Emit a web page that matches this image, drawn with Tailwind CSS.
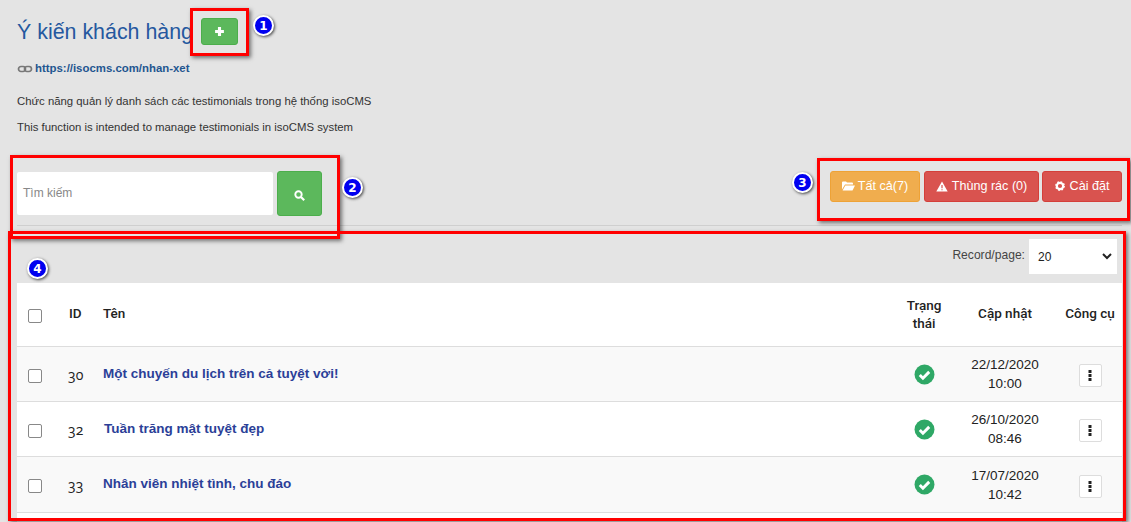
<!DOCTYPE html>
<html lang="vi">
<head>
    <meta charset="UTF-8">
    <title>Ý kiến khách hàng</title>
    <script src="https://cdn.jsdelivr.net/npm/@tailwindcss/browser@4"></script>
</head>
<body class="relative h-[522px] overflow-hidden bg-[#e4e4e4] font-['Liberation_Sans',sans-serif] text-[#333]">
    <div class="pl-[17px] pr-[9px]">
        <!-- Heading -->
        <div class="flex items-center h-[46px] pt-[17px]">
            <h1 class="text-[21.4px] leading-[28px] text-[#25589f]">Ý kiến khách hàng</h1>
            <button class="ml-2 flex h-[27px] w-[37px] items-center justify-center rounded-[3px] border border-[#4cae4c] bg-[#5cb85c]">
                <svg class="h-[11px] w-[11px]" viewBox="0 0 10 10"><path d="M5 1v8M1 5h8" stroke="#fff" stroke-width="2.8"/></svg>
            </button>
        </div>
        <div class="mt-[15px] flex h-[16px] items-center text-[11.4px] font-bold text-[#1f5690]">
            <svg class="mr-[2px] h-[8px] w-[16px]" viewBox="0 0 15 8"><rect x="1" y="1.500" width="7" height="5" rx="2.500" fill="none" stroke="#777" stroke-width="1.700"/><rect x="7" y="1.500" width="7" height="5" rx="2.500" fill="none" stroke="#777" stroke-width="1.700"/></svg>
            https://isocms.com/nhan-xet
        </div>
        <p class="mt-[16px] text-[11.35px] leading-[16px] text-[#333]">Chức năng quản lý danh sách các testimonials trong hệ thống isoCMS</p>
        <p class="mt-[10px] text-[11.35px] leading-[16px] text-[#333]">This function is intended to manage testimonials in isoCMS system</p>

        <!-- Toolbar -->
        <div class="mt-[36px] flex h-[54px] items-start justify-between">
            <div class="flex items-start">
                <div class="mt-px flex h-[43px] w-[256px] items-center rounded-[2px] bg-white pb-[2px] pl-[6px] text-[12px] text-[#888]">Tìm kiếm</div>
                <button class="ml-1 flex h-[45px] w-[45px] items-center justify-center rounded-[3px] border border-[#4cae4c] bg-[#5cb85c]">
                    <svg class="mt-[3px] h-[11px] w-[11px]" viewBox="0 0 11 11" fill="none" stroke="#fff"><circle cx="4.500" cy="4.500" r="3.200" stroke-width="1.900"/><path d="M7 7l3.200 3.200" stroke-width="2.200"/></svg>
                </button>
            </div>
            <div class="flex gap-1 text-[12.6px] text-white">
                <div class="flex h-[31px] w-[90px] items-center justify-center rounded-[3px] border border-[#eea236] bg-[#f0ad4e] pb-px">
                    <svg class="mr-[3px] h-[10px] w-[13px]" viewBox="0 0 13 10" fill="#fff"><path d="M0 1.500Q0 .5 1 .5h3l1 1h5q1 0 1 1v1H3L0 8.500zM3.300 4.500H13l-2.500 5H.6z"/></svg>Tất cả(7)
                </div>
                <div class="flex h-[31px] w-[115px] items-center justify-center rounded-[3px] border border-[#d43f3a] bg-[#d9534f] pb-px">
                    <svg class="mr-[4px] h-[11px] w-[12px]" viewBox="0 0 12 11"><path d="M6 .5l5.700 10H.3z" fill="#fff"/><path d="M6 4v3.300M6 8.200v1" stroke="#d9534f" stroke-width="1.200"/></svg>Thùng rác (0)
                </div>
                <div class="-ml-px flex h-[31px] w-[80px] items-center justify-center rounded-[3px] border border-[#d43f3a] bg-[#d9534f] pb-px">
                    <svg class="mr-[5px] h-[10px] w-[10px]" viewBox="0 0 10 10"><circle cx="5" cy="5" r="3.200" fill="none" stroke="#fff" stroke-width="2.200"/><circle cx="5" cy="5" r="4.300" fill="none" stroke="#fff" stroke-width="1.200" stroke-dasharray="1.700 1.680"/></svg>Cài đặt
                </div>
            </div>
        </div>
        <div class="h-px bg-[#cfcfcf]"></div>

        <!-- Per page -->
        <div class="mt-[13px] flex h-[44px] items-start justify-end pr-[5px]">
            <span class="mt-[9px] mr-1 text-[12.1px] leading-[14px] text-[#444]">Record/page:</span>
            <div class="flex h-[35px] w-[88px] items-center justify-between bg-white pl-[9px] pr-[5px] text-[12px] text-[#222]">
                20
                <svg class="h-[7px] w-[10px]" viewBox="0 0 10 7" fill="none" stroke="#222" stroke-width="2"><path d="M1 1l4 4 4-4"/></svg>
            </div>
        </div>

        <!-- Table -->
        <div class="bg-white text-[13.5px] text-[#222]">
            <div class="flex h-[64px] items-center border-b border-[#ddd] pb-[2px] font-['Roboto',sans-serif] text-[13.5px] font-medium">
                <div class="flex w-[35px] justify-center pt-[4px]"><span class="h-[14px] w-[14px] rounded-[2px] border border-[#888] bg-white"></span></div>
                <div class="w-[51px] pl-[17px]">ID</div>
                <div class="flex-1">Tên</div>
                <div class="w-[68px] text-center leading-[18px]">Trạng<br>thái</div>
                <div class="w-[94px] text-center">Cập nhật</div>
                <div class="w-[70px] pl-[6px] text-center">Công cụ</div>
            </div>

            <div class="flex h-[55px] items-center border-b border-[#ddd] bg-[#f9f9f9]">
                <div class="flex w-[35px] justify-center pt-[3px]"><span class="h-[14px] w-[14px] rounded-[2px] border border-[#888] bg-white"></span></div>
                <div class="w-[51px] pl-[16px] font-['Open_Sans',serif] text-[14px] [font-feature-settings:'onum']">30</div>
                <div class="flex-1 font-bold text-[#2b3f98]">Một chuyến du lịch trên cả tuyệt vời!</div>
                <div class="flex w-[68px] justify-center">
                    <svg class="h-[21px] w-[21px]" viewBox="0 0 20 20"><circle cx="10" cy="10" r="9.500" fill="#2fa866"/><path d="M5.500 10.500l3 3 6-6" fill="none" stroke="#fff" stroke-width="2.800"/></svg>
                </div>
                <div class="w-[94px] text-center leading-[19px]">22/12/2020<br>10:00</div>
                <div class="flex w-[70px] justify-center pl-[6px] pt-[3px]">
                    <span class="flex h-[23px] w-[23px] items-center justify-center rounded-[2px] border border-[#ddd] bg-white"><svg class="h-[11px] w-1" viewBox="0 0 4 11" fill="#222"><rect x=".5" width="3" height="3"/><rect x=".5" y="4" width="3" height="3"/><rect x=".5" y="8" width="3" height="3"/></svg></span>
                </div>
            </div>

            <div class="flex h-[55px] items-center border-b border-[#ddd] bg-white">
                <div class="flex w-[35px] justify-center pt-[3px]"><span class="h-[14px] w-[14px] rounded-[2px] border border-[#888] bg-white"></span></div>
                <div class="w-[51px] pl-[16px] font-['Open_Sans',serif] text-[14px] [font-feature-settings:'onum']">32</div>
                <div class="flex-1 pl-px font-bold text-[#2b3f98]">Tuần trăng mật tuyệt đẹp</div>
                <div class="flex w-[68px] justify-center">
                    <svg class="h-[21px] w-[21px]" viewBox="0 0 20 20"><circle cx="10" cy="10" r="9.500" fill="#2fa866"/><path d="M5.500 10.500l3 3 6-6" fill="none" stroke="#fff" stroke-width="2.800"/></svg>
                </div>
                <div class="w-[94px] text-center leading-[19px]">26/10/2020<br>08:46</div>
                <div class="flex w-[70px] justify-center pl-[6px] pt-[3px]">
                    <span class="flex h-[23px] w-[23px] items-center justify-center rounded-[2px] border border-[#ddd] bg-white"><svg class="h-[11px] w-1" viewBox="0 0 4 11" fill="#222"><rect x=".5" width="3" height="3"/><rect x=".5" y="4" width="3" height="3"/><rect x=".5" y="8" width="3" height="3"/></svg></span>
                </div>
            </div>

            <div class="flex h-[56px] items-center border-b border-[#ddd] bg-[#f9f9f9]">
                <div class="flex w-[35px] justify-center pt-[3px]"><span class="h-[14px] w-[14px] rounded-[2px] border border-[#888] bg-white"></span></div>
                <div class="w-[51px] pl-[16px] font-['Open_Sans',serif] text-[14px] [font-feature-settings:'onum']">33</div>
                <div class="flex-1 font-bold text-[#2b3f98]">Nhân viên nhiệt tình, chu đáo</div>
                <div class="flex w-[68px] justify-center">
                    <svg class="h-[21px] w-[21px]" viewBox="0 0 20 20"><circle cx="10" cy="10" r="9.500" fill="#2fa866"/><path d="M5.500 10.500l3 3 6-6" fill="none" stroke="#fff" stroke-width="2.800"/></svg>
                </div>
                <div class="w-[94px] text-center leading-[19px]">17/07/2020<br>10:42</div>
                <div class="flex w-[70px] justify-center pl-[6px] pt-[3px]">
                    <span class="flex h-[23px] w-[23px] items-center justify-center rounded-[2px] border border-[#ddd] bg-white"><svg class="h-[11px] w-1" viewBox="0 0 4 11" fill="#222"><rect x=".5" width="3" height="3"/><rect x=".5" y="4" width="3" height="3"/><rect x=".5" y="8" width="3" height="3"/></svg></span>
                </div>
            </div>
            <div class="h-[20px]"></div>
        </div>
    </div>

    <!-- Annotations laid over the screenshot -->
    <div class="absolute left-[190px] top-[8px] h-[48px] w-[59px] border-[3px] border-[#f00] shadow-[2px_2px_4px_rgba(0,0,0,0.5)]"></div>
    <div class="absolute left-[10px] top-[155px] h-[84px] w-[330px] border-[3px] border-[#f00] shadow-[2px_2px_4px_rgba(0,0,0,0.5)]"></div>
    <div class="absolute left-[817px] top-[158px] h-[63px] w-[313px] border-[3px] border-[#f00] shadow-[2px_2px_4px_rgba(0,0,0,0.5)]"></div>
    <div class="absolute left-[8px] top-[231px] h-[290px] w-[1118px] border-[3px] border-[#f00] shadow-[2px_2px_4px_rgba(0,0,0,0.5)]"></div>

    <div class="absolute left-[253px] top-[15px] flex h-[21px] w-[21px] items-center justify-center rounded-full border-2 border-white bg-[#0000f0] font-['DejaVu_Sans',sans-serif] text-[12px] font-bold text-white shadow-[1px_1px_3px_rgba(0,0,0,0.7)]">1</div>
    <div class="absolute left-[342px] top-[177px] flex h-[21px] w-[21px] items-center justify-center rounded-full border-2 border-white bg-[#0000f0] font-['DejaVu_Sans',sans-serif] text-[12px] font-bold text-white shadow-[1px_1px_3px_rgba(0,0,0,0.7)]">2</div>
    <div class="absolute left-[792px] top-[172px] flex h-[21px] w-[21px] items-center justify-center rounded-full border-2 border-white bg-[#0000f0] font-['DejaVu_Sans',sans-serif] text-[12px] font-bold text-white shadow-[1px_1px_3px_rgba(0,0,0,0.7)]">3</div>
    <div class="absolute left-[27px] top-[258px] flex h-[21px] w-[21px] items-center justify-center rounded-full border-2 border-white bg-[#0000f0] font-['DejaVu_Sans',sans-serif] text-[12px] font-bold text-white shadow-[1px_1px_3px_rgba(0,0,0,0.7)]">4</div>
</body>
</html>
